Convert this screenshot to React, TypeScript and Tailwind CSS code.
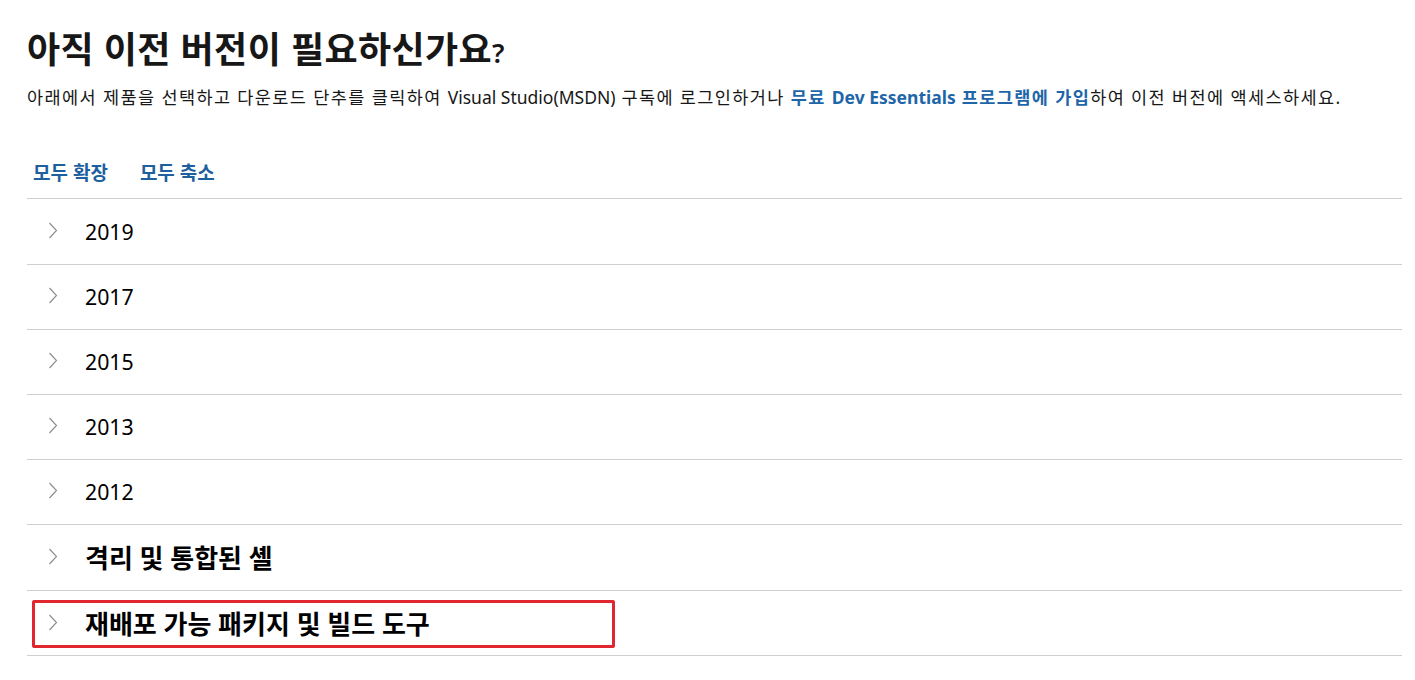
import React from "react";

const rows = [
  { label: "2019", bold: false, h: "h-[66px]" },
  { label: "2017", bold: false, h: "h-[65px]" },
  { label: "2015", bold: false, h: "h-[65px]" },
  { label: "2013", bold: false, h: "h-[65px]" },
  { label: "2012", bold: false, h: "h-[65px]" },
  { label: "격리 및 통합된 셸", bold: true, h: "h-[66px]" },
  { label: "재배포 가능 패키지 및 빌드 도구", bold: true, highlight: true, h: "h-[65px]" },
];

function Chevron() {
  return (
    <svg width="10" height="17" viewBox="0 0 10 17" className="shrink-0">
      <path d="M1.5 1 L8.5 8.5 L1.5 16" fill="none" stroke="#8a8a8a" strokeWidth="1.1" />
    </svg>
  );
}

function K({ children }: { children: React.ReactNode }) {
  return <span className="tracking-[1.4px]">{children}</span>;
}

export default function App() {
  return (
    <div
      className="bg-white w-[1415px] h-[680px] text-[#171717]"
      style={{ fontFamily: '"Noto Sans", "Noto Sans CJK KR", sans-serif' }}
    >
      <div className="pl-[27px] pr-[13px] pt-[24px]">
        <h1 className="text-[36px] font-bold h-[52px] leading-[52px] tracking-[0.4px]">
          아직 이전 버전이 필요하신가요<span className="text-[27px] font-semibold leading-none">?</span>
        </h1>
        <p className="text-[17.5px] leading-[26px] mt-[8px]">
          <K>아래에서 제품을 선택하고 다운로드 단추를 클릭하여 </K>Visual Studio(MSDN)
          <K> 구독에 로그인하거나 </K>
          <a className="text-[#1e66a8] font-bold">
            <K>무료 </K>Dev Essentials<K> 프로그램에 가입</K>
          </a>
          <K>하여 이전 버전에 액세스하세요.</K>
        </p>
        <div className="flex gap-[32px] pl-[6px] mt-[50px] text-[#1e5f9e] font-bold text-[19px] leading-[26px]">
          <span>모두 확장</span>
          <span>모두 축소</span>
        </div>
        <div className="mt-[12px] border-t border-[#cfcfcf]">
          {rows.map((r) =>
            r.highlight ? (
              <div key={r.label} className={r.h + " border-b border-[#cfcfcf] flex items-start pt-[9px] px-[5px]"}>
                <div className="flex items-center h-[48px] w-[583px] border-[3px] border-[#e0262f] rounded-[2px] pl-[13px]">
                  <div className="-mt-[3px]">
                    <Chevron />
                  </div>
                  <span className="font-bold text-[26px] ml-[27px] text-black leading-[30px]">{r.label}</span>
                </div>
              </div>
            ) : (
              <div key={r.label} className={r.h + " border-b border-[#cfcfcf] flex items-center px-[5px]"}>
                <div className="flex items-center pl-[16px]">
                  <div className="-mt-[3px]">
                    <Chevron />
                  </div>
                  <span
                    className={
                      (r.bold ? "font-bold text-[26px] " : "text-[21.3px] ") + "ml-[27px] text-black leading-[30px]"
                    }
                  >
                    {r.label}
                  </span>
                </div>
              </div>
            )
          )}
        </div>
      </div>
    </div>
  );
}
